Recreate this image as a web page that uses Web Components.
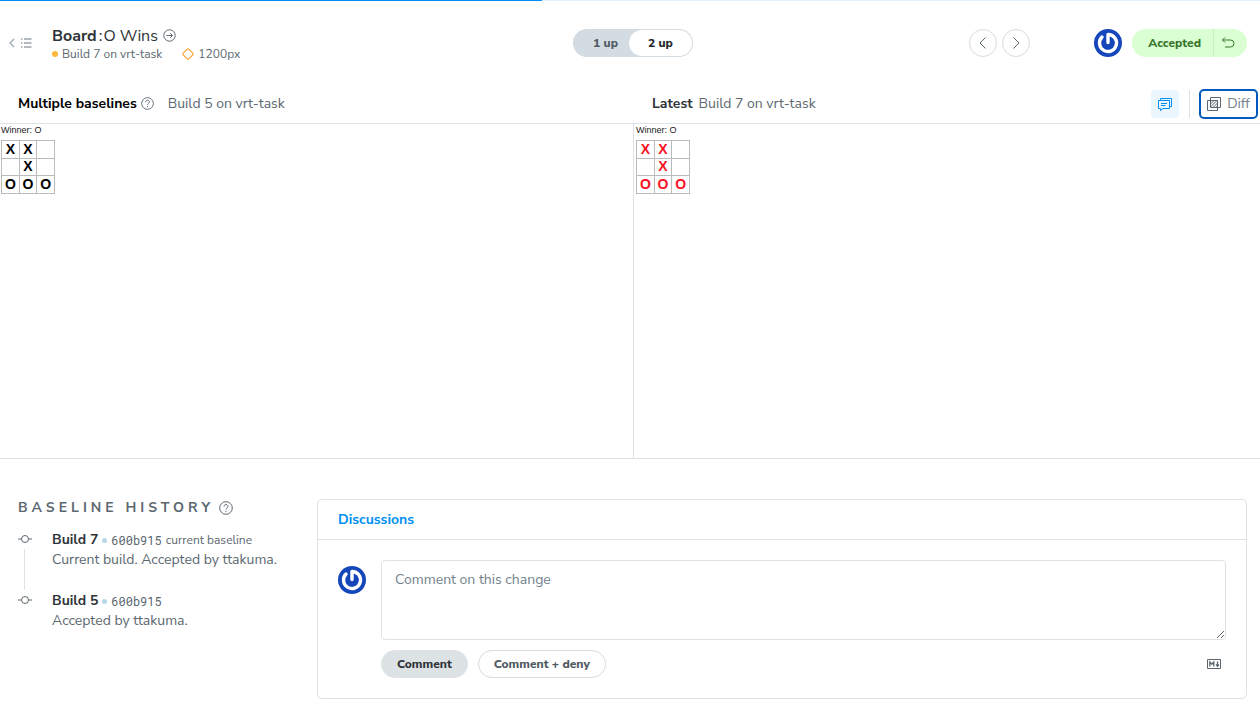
<!DOCTYPE html>
<html lang="en">
<head>
<meta charset="utf-8">
<title>Board: O Wins</title>
<style>
  body { margin: 0; background: #fff; color: #5c6870; font: 14px/20px "Nunito Sans", "Open Sans", sans-serif; }
</style>
</head>
<body>
<review-page></review-page>

<script>
const define = (name, html, setup) => {
  const template = document.createElement('template');
  template.innerHTML = html;
  customElements.define(name, class extends HTMLElement {
    constructor() {
      super();
      this.attachShadow({ mode: 'open' }).append(template.content.cloneNode(true));
    }
    connectedCallback() {
      if (setup) setup.call(this, this.shadowRoot);
    }
  });
};

const icons = {
  back: [8, 10, '<path d="M6 1 2 5l4 4" stroke-width="1.200"/>'],
  list: [12, 12, '<path d="M1 2h1.500M4 2H11.500M1 6h1.500M4 6H11.500M1 10h1.500M4 10H11.500" stroke-width="1.400"/>'],
  go: [13, 13, '<circle cx="6.5" cy="6.5" r="5.700"/><path d="M3.500 6.500h6M7.200 4.200l2.300 2.300-2.300 2.300"/>'],
  help: [14, 14, '<circle cx="7" cy="7" r="6.300"/><path d="M5 5.600C5 2.800 9 2.800 9 5.400 9 7 7 6.700 7 8.500M7 9.800v1.200"/>'],
  diamond: [12, 12, '<rect x="2" y="2" width="8" height="8" rx="1.500" transform="rotate(45 6 6)"/>'],
  prev: [12, 14, '<path d="M8.500 1.500 3 7l5.500 5.500"/>'],
  next: [12, 14, '<path d="M3.500 1.500 9 7l-5.500 5.500"/>'],
  undo: [14, 12, '<path d="M4 .5 1.500 3 4 5.500M1.500 3H9.500a3.500 3.500 0 0 1 0 7H4"/>'],
  chat: [14, 14, '<path d="M.5 3.500h11v8H5L2.500 13.500v-2h-2zM2.500 3.500v-2h11v8h-2M3 6.500h6M3 8.500h4.500"/>'],
  diff: [14, 14, '<path d="M.5 3.500h10v10H.5zM3.500.5h10v10h-10z"/><path d="M3.500 7l3.500-3.500M3.500 10l6.500-6.500M6 10.500l4.500-4.500M9 10.500l1.500-1.500"/>'],
  commit: [14, 10, '<circle cx="7" cy="5" r="3.500"/><path d="M0 5h3.500M10.500 5H14"/>'],
  markdown: [14, 10, '<path d="M.5.5h13v9H.5z"/><path d="M2.800 7.500V3l2 2.300L6.800 3v4.500M10.500 2.500V7M9 5.500l1.500 1.800L12 5.500" stroke-width="1.300"/>']
};

define('ui-icon', `
  <style>
    :host { display: inline-flex; flex: none; }
    svg { display: block; fill: none; stroke: currentColor; stroke-width: 1; }
  </style>
  <svg aria-hidden="true"></svg>`, function (root) {
  const [w, h, paths] = icons[this.getAttribute('name')];
  const size = Number(this.getAttribute('width') || w);
  const svg = root.querySelector('svg');
  svg.setAttribute('viewBox', `0 0 ${w} ${h}`);
  svg.setAttribute('width', size);
  svg.setAttribute('height', Math.round(size * h / w));
  svg.innerHTML = paths;
});

define('user-avatar', `
  <style>
    :host { display: block; flex: none; width: 28px; height: 28px; }
    svg { display: block; }
  </style>
  <svg width="28" height="28" viewBox="0 0 28 28" role="img" aria-label="ttakuma">
    <circle cx="14" cy="14" r="14" fill="#1546ba"/>
    <path d="M14 13.500V5.500a8.500 8.500 0 1 1-6 2.500" fill="none" stroke="#fff" stroke-width="3.400" stroke-linecap="round" stroke-linejoin="round"/>
  </svg>`);

define('progress-line', `
  <style>
    :host { display: block; height: 1px; background: #dff1fd; }
    div { width: 43%; height: 1px; background: #028ff4; }
  </style>
  <div></div>`);

define('view-toggle', `
  <style>
    :host { display: flex; box-sizing: border-box; height: 28px; padding: 1px; border-radius: 14px; background: #d3dce2; }
    button { margin: 0; border: 0; padding: 0 19px; border-radius: 13px; background: none; color: #4f5b63; font: 800 12px/26px "Nunito Sans", "Open Sans", sans-serif; }
    button:first-of-type { padding-right: 11px; }
    [aria-pressed="true"] { background: #fff; color: #22282c; }
  </style>
  <button type="button" aria-pressed="false">1 up</button>
  <button type="button" aria-pressed="true">2 up</button>`);

define('review-header', `
  <style>
    :host { display: grid; grid-template-columns: 1fr auto 1fr; align-items: center; height: 83px; padding: 0 13px 0 19px; box-sizing: border-box; }
    .left, .right, nav { display: flex; align-items: center; }
    .left { margin-left: -11px; }
    .back { display: flex; align-items: center; gap: 4px; width: 44px; color: #9aa5ad; text-decoration: none; }
    .title { padding-top: 2px; }
    h1 { display: flex; align-items: center; gap: 5px; margin: 0; color: #2e3438; font-size: 16px; line-height: 20px; font-weight: 400; }
    h1 i { margin: 0 1px 0 2px; font-style: normal; }
    h1 ui-icon { color: #5c6870; }
    .meta { display: flex; align-items: center; font-size: 12px; line-height: 16px; }
    .dot { width: 6px; height: 6px; margin-right: 4px; border-radius: 50%; background: #fdb73b; }
    .meta ui-icon { margin: 0 4px 0 20px; color: #fc9b25; }
    .right { justify-content: flex-end; }
    nav { gap: 5px; margin-right: 64px; }
    button { font: inherit; margin: 0; }
    nav button { display: flex; align-items: center; justify-content: center; width: 28px; height: 28px; padding: 0; border: 1px solid #d3dce2; border-radius: 50%; background: #fff; color: #5c6870; }
    .status { display: flex; margin-left: 10px; border-radius: 14px; overflow: hidden; background: #daffd2; }
    .status button { height: 28px; border: 0; padding: 0 12px 0 16px; background: none; color: #38762b; font-size: 12px; font-weight: 800; }
    .status .undo { display: flex; align-items: center; padding: 0 12px 0 7px; border-left: 1px solid #c5f1bc; }
  </style>
  <div class="left">
    <a class="back" href="#" aria-label="Back to list"><ui-icon name="back"></ui-icon><ui-icon name="list"></ui-icon></a>
    <div class="title">
      <h1><span><b>Board</b><i>:</i>O Wins</span><ui-icon name="go"></ui-icon></h1>
      <div class="meta"><span class="dot"></span>Build 7 on vrt-task<ui-icon name="diamond"></ui-icon>1200px</div>
    </div>
  </div>
  <view-toggle></view-toggle>
  <div class="right">
    <nav>
      <button type="button" aria-label="Previous"><ui-icon name="prev"></ui-icon></button>
      <button type="button" aria-label="Next"><ui-icon name="next"></ui-icon></button>
    </nav>
    <user-avatar></user-avatar>
    <div class="status">
      <button type="button">Accepted</button>
      <button type="button" class="undo" aria-label="Undo"><ui-icon name="undo"></ui-icon></button>
    </div>
  </div>`);

define('game-board', `
  <style>
    :host { display: block; padding: 1px; color: #000; font-family: "Liberation Sans", Arial, sans-serif; }
    p { margin: 0 0 4px; color: #222; font-size: 9px; line-height: 11px; }
    table { border: 1px solid #999; border-collapse: collapse; table-layout: fixed; width: 54px; height: 54px; }
    td { box-sizing: border-box; padding: 0; border: 1px solid #bbb; color: var(--mark, #000); font-size: 14px; line-height: 15px; font-weight: 700; text-align: center; }
  </style>
  <p>Winner: O</p>
  <table>
    <tr><td>X</td><td>X</td><td></td></tr>
    <tr><td></td><td>X</td><td></td></tr>
    <tr><td>O</td><td>O</td><td>O</td></tr>
  </table>`);

define('snapshot-pane', `
  <style>
    :host { display: flex; flex-direction: column; min-width: 0; }
    header { display: flex; align-items: center; box-sizing: border-box; height: 40px; padding: 0 2px 0 18px; border-bottom: 1px solid #dde2e5; }
    .body { flex: 1; padding: 0 1px; border-right: var(--divider, 0); }
    .tools { display: flex; margin-left: auto; }
  </style>
  <header><slot name="title"></slot><div class="tools"><slot name="tools"></slot></div></header>
  <div class="body"><slot></slot></div>`);

define('compare-view', `
  <style>
    :host { display: grid; grid-template-columns: calc(50% + 4px) 1fr; height: 374px; border-bottom: 1px solid #dde2e5; }
    [slot="title"] { display: flex; align-items: center; }
    b { color: #2e3438; }
    .base b { color: #000; }
    .base { --divider: 1px solid #dde2e5; }
    .base game-board { margin-left: -1px; }
    .base ui-icon { margin: 0 14px 0 4px; }
    .latest { --mark: #f9121f; }
    .latest b { margin-right: 6px; }
    [slot="tools"] { display: flex; align-items: center; }
    button { display: flex; align-items: center; justify-content: center; box-sizing: border-box; margin: 0; padding: 0; font: inherit; }
    .comments { width: 28px; height: 28px; border: 0; border-radius: 4px; background: #ebf6ff; color: #028ff4; }
    .rule { width: 1px; height: 28px; margin: 0 9px 0 10px; background: #dde2e5; }
    .diff { width: 59px; height: 30px; gap: 6px; border: 2px solid #0059bd; border-radius: 5px; background: #fff; color: #73828c; }
    .diff ui-icon { color: #5c6870; }
  </style>
  <snapshot-pane class="base">
    <div slot="title"><b>Multiple baselines</b><ui-icon name="help" width="13"></ui-icon>Build 5 on vrt-task</div>
    <game-board></game-board>
  </snapshot-pane>
  <snapshot-pane class="latest">
    <div slot="title"><b>Latest</b>Build 7 on vrt-task</div>
    <div slot="tools">
      <button type="button" class="comments" aria-label="Comments"><ui-icon name="chat"></ui-icon></button>
      <span class="rule"></span>
      <button type="button" class="diff"><ui-icon name="diff"></ui-icon>Diff</button>
    </div>
    <game-board></game-board>
  </snapshot-pane>`);

define('history-item', `
  <style>
    :host { display: grid; grid-template-columns: 14px 1fr; gap: 20px; }
    .track { display: flex; flex-direction: column; align-items: center; padding-top: 4px; color: #5c6870; }
    .line { display: var(--line, block); width: 1px; height: 41px; margin: 5px 1px 1px 0; background: #dde2e5; }
    .name { display: flex; align-items: center; font-size: 12px; line-height: 20px; white-space: nowrap; }
    b { color: #2e3438; font-size: 14px; }
    .dot { width: 5px; height: 5px; margin: 1px 4px 0; border-radius: 50%; background: #b5d7e6; }
    code { margin-right: 4px; font: 12px/20px "Roboto Mono", "Liberation Mono", monospace; }
    .text { white-space: nowrap; }
  </style>
  <div class="track"><ui-icon name="commit"></ui-icon><span class="line"></span></div>
  <div>
    <div class="name"><b><slot name="build"></slot></b><span class="dot"></span><code>600b915</code><slot name="note"></slot></div>
    <div class="text"><slot></slot></div>
  </div>`);

define('baseline-history', `
  <style>
    :host { display: block; }
    h2 { display: flex; align-items: center; gap: 5px; margin: 0 0 13px; font-size: 14px; line-height: 18px; font-weight: 700; letter-spacing: 4px; white-space: nowrap; }
    history-item:last-child { --line: none; }
  </style>
  <h2>BASELINE HISTORY<ui-icon name="help"></ui-icon></h2>
  <history-item><span slot="build">Build 7</span><span slot="note">current baseline</span>Current build. Accepted by ttakuma.</history-item>
  <history-item><span slot="build">Build 5</span>Accepted by ttakuma.</history-item>`);

define('discussion-panel', `
  <style>
    :host { display: block; border: 1px solid #dde2e5; border-radius: 5px; }
    h2 { margin: 0; padding: 10px 20px 9px; border-bottom: 1px solid #dde2e5; color: #028ff4; font-size: 14px; line-height: 20px; font-weight: 700; }
    form { display: flex; gap: 15px; padding: 20px; }
    user-avatar { margin-top: 6px; }
    .entry { flex: 1; min-width: 0; }
    textarea { display: block; box-sizing: border-box; width: 100%; height: 80px; margin: 0 0 10px; padding: 9px 13px; border: 1px solid #dde2e5; border-radius: 4px; background: #fff; color: #2e3438; font: inherit; resize: both; }
    textarea::placeholder { color: #73828c; opacity: 1; }
    .actions { display: flex; align-items: center; gap: 10px; }
    button { box-sizing: border-box; height: 28px; margin: 0; padding: 0 15px; border: 1px solid #d3dce2; border-radius: 14px; background: #fff; color: #4f5b63; font: 800 12px/26px "Nunito Sans", "Open Sans", sans-serif; }
    .primary { border-color: #dde2e5; background: #dde2e5; color: #2e3438; }
    a { display: flex; margin: 0 5px 0 auto; color: #5c6870; }
  </style>
  <h2>Discussions</h2>
  <form>
    <user-avatar></user-avatar>
    <div class="entry">
      <textarea aria-label="Comment on this change" placeholder="Comment on this change"></textarea>
      <div class="actions">
        <button type="button" class="primary">Comment</button>
        <button type="button">Comment + deny</button>
        <a href="#" aria-label="Markdown supported"><ui-icon name="markdown"></ui-icon></a>
      </div>
    </div>
  </form>`);

define('review-page', `
  <style>
    :host { display: block; }
    .details { display: grid; grid-template-columns: 279px 1fr; gap: 20px; align-items: start; padding: 40px 13px 12px 18px; }
  </style>
  <progress-line></progress-line>
  <review-header></review-header>
  <compare-view></compare-view>
  <main class="details">
    <baseline-history></baseline-history>
    <discussion-panel></discussion-panel>
  </main>`);
</script>
</body>
</html>
